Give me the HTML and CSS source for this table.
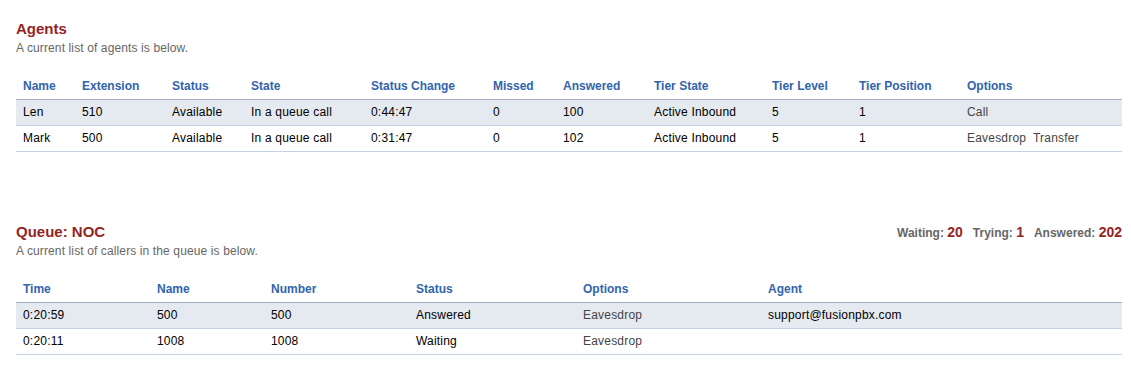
FILE: index.html
```html
<!DOCTYPE html>
<html>
<head>
<meta charset="utf-8">
<link rel="stylesheet" href="styles.css">
</head>
<body>
<div class="page">
  <section class="section">
    <div class="section-head">
      <div class="heading">
        <div class="title">Agents</div>
        <div class="subtitle">A current list of agents is below.</div>
      </div>
    </div>
    <table class="grid">
      <colgroup>
        <col class="w59"><col class="w90"><col class="w79"><col class="w120"><col class="w122"><col class="w70"><col class="w91"><col class="w118"><col class="w87"><col class="w108"><col>
      </colgroup>
      <thead>
        <tr><th>Name</th><th>Extension</th><th>Status</th><th>State</th><th>Status Change</th><th>Missed</th><th>Answered</th><th>Tier State</th><th>Tier Level</th><th>Tier Position</th><th>Options</th></tr>
      </thead>
      <tbody>
        <tr class="alt"><td>Len</td><td>510</td><td>Available</td><td>In a queue call</td><td>0:44:47</td><td>0</td><td>100</td><td>Active Inbound</td><td>5</td><td>1</td><td class="opt"><a>Call</a></td></tr>
        <tr><td>Mark</td><td>500</td><td>Available</td><td>In a queue call</td><td>0:31:47</td><td>0</td><td>102</td><td>Active Inbound</td><td>5</td><td>1</td><td class="opt"><a>Eavesdrop</a>&nbsp; <a>Transfer</a></td></tr>
      </tbody>
    </table>
  </section>

  <section class="section queue">
    <div class="section-head">
      <div class="heading">
        <div class="title">Queue: NOC</div>
        <div class="subtitle">A current list of callers in the queue is below.</div>
      </div>
      <div class="stats">
        <span class="stat">Waiting: <b>20</b></span>
        <span class="stat">Trying: <b>1</b></span>
        <span class="stat">Answered: <b>202</b></span>
      </div>
    </div>
    <table class="grid">
      <colgroup>
        <col class="w134"><col class="w114"><col class="w145"><col class="w167"><col class="w185"><col>
      </colgroup>
      <thead>
        <tr><th>Time</th><th>Name</th><th>Number</th><th>Status</th><th>Options</th><th>Agent</th></tr>
      </thead>
      <tbody>
        <tr class="alt"><td>0:20:59</td><td>500</td><td>500</td><td>Answered</td><td class="opt"><a>Eavesdrop</a></td><td>support@fusionpbx.com</td></tr>
        <tr><td>0:20:11</td><td>1008</td><td>1008</td><td>Waiting</td><td class="opt"><a>Eavesdrop</a></td><td></td></tr>
      </tbody>
    </table>
  </section>
</div>
</body>
</html>
```

FILE: styles.css
```css
html, body {
  margin: 0;
  padding: 0;
  background: #ffffff;
}

body {
  font-family: "Liberation Sans", Arial, sans-serif;
  font-size: 12px;
  color: #000000;
}

.page {
  padding: 19px 9px 0 16px;
}

.section-head {
  display: flex;
  justify-content: space-between;
  align-items: baseline;
}

.title {
  color: #952424;
  font-size: 15px;
  font-weight: bold;
  line-height: 20px;
}

.subtitle {
  color: #666666;
  font-size: 12px;
  line-height: 18px;
  letter-spacing: 0.12px;
}

.queue {
  margin-top: 70px;
}

.stats {
  display: flex;
  gap: 10px;
  color: #666666;
  font-size: 12px;
  font-weight: bold;
  line-height: 20px;
}

.stat b {
  color: #952424;
  font-size: 14px;
}

.grid {
  width: 100%;
  margin-top: 14px;
  border-collapse: collapse;
  border-spacing: 0;
  table-layout: fixed;
}

.grid th {
  color: #3164ad;
  font-size: 12px;
  font-weight: bold;
  text-align: left;
  line-height: 18px;
  padding: 6px 7px 4px;
  border-bottom: 1px solid #a4aebf;
  white-space: nowrap;
}

.grid td {
  font-size: 12px;
  line-height: 18px;
  padding: 3px 7px 4px;
  border-bottom: 1px solid #c5d1e5;
  white-space: nowrap;
  color: #000000;
  letter-spacing: 0.2px;
}

.grid tr.alt td {
  background: #e5e9f0;
}

.grid td.opt a {
  color: #444444;
  text-decoration: none;
}

.w59 { width: 59px; }
.w70 { width: 70px; }
.w79 { width: 79px; }
.w87 { width: 87px; }
.w90 { width: 90px; }
.w91 { width: 91px; }
.w108 { width: 108px; }
.w114 { width: 114px; }
.w118 { width: 118px; }
.w120 { width: 120px; }
.w122 { width: 122px; }
.w134 { width: 134px; }
.w145 { width: 145px; }
.w167 { width: 167px; }
.w185 { width: 185px; }
```
